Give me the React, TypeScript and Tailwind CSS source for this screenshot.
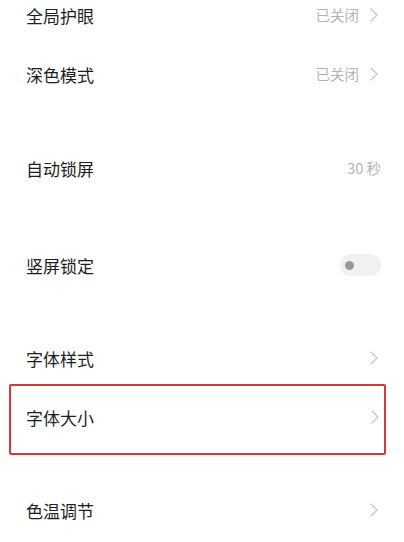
const labelFont = { fontFamily: '"Noto Sans CJK SC", "Noto Sans", sans-serif' };

function Chevron() {
  return (
    <svg width="8" height="14" viewBox="0 0 8 14" fill="none" className="shrink-0">
      <path d="M1 1l6 6-6 6" stroke="#c4c4c4" strokeWidth="1.2" strokeLinecap="round" strokeLinejoin="round" />
    </svg>
  );
}

function Toggle() {
  return (
    <div className="flex h-[22px] w-[41px] items-center rounded-full bg-[#f1f1f1] pl-[5px] -mr-[3px]">
      <span className="h-[9px] w-[9px] rounded-full bg-[#9a9a9a]" />
    </div>
  );
}

type RowProps = {
  label: string;
  value?: string;
  chevron?: boolean;
  toggle?: boolean;
  className?: string;
};

function Row({ label, value, chevron, toggle, className = "" }: RowProps) {
  return (
    <div className={`flex h-[34px] items-center justify-between px-[26px] ${className}`}>
      <span className="text-[17px] leading-none text-[#1e1e1e]">{label}</span>
      <div className="flex items-center gap-[11px]">
        {value ? <span className="text-[14.5px] leading-none text-[#b3b3b3]">{value}</span> : null}
        {chevron ? <Chevron /> : null}
        {toggle ? <Toggle /> : null}
      </div>
    </div>
  );
}

export default function App() {
  return (
    <div className="h-[542px] w-[404px] overflow-hidden bg-white" style={labelFont}>
      <div className="-mt-[2px] flex flex-col">
        <Row label="全局护眼" value="已关闭" chevron />
        <Row label="深色模式" value="已关闭" chevron className="mt-[25px]" />
        <Row label="自动锁屏" value="30 秒" className="mt-[60px] pr-[23px]" />
        <Row label="竖屏锁定" toggle className="mt-[63px]" />
        <Row label="字体样式" chevron className="mt-[59px]" />

        <div className="ml-[9px] mr-[18px] mt-[9px] flex h-[71px] items-center justify-between rounded-[2px] border-2 border-[#d03a3a] pb-[5px] pl-[15px] pr-[5px]">
          <span className="text-[17px] leading-none text-[#1e1e1e]">字体大小</span>
          <Chevron />
        </div>

        <Row label="色温调节" chevron className="mt-[38px]" />
      </div>
    </div>
  );
}
